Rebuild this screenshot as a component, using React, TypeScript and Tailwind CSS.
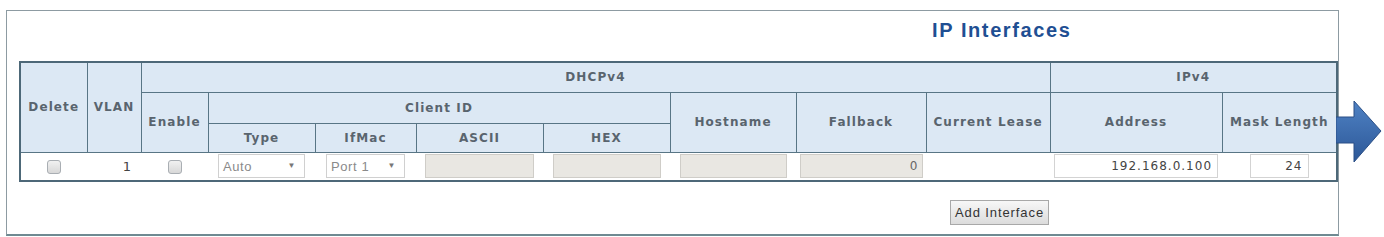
import React from 'react';

const headCell =
  'border border-[#587585] bg-[#dce8f4] text-center align-middle font-bold text-[12px] tracking-[1.1px] text-[#59646e] p-0';

const Checkbox = () => (
  <span className="inline-block w-[14px] h-[14px] rounded-[3px] border border-[#a9aeb3] bg-gradient-to-b from-[#f1f1f1] to-[#d8d8d8] align-middle" />
);

const FakeSelect: React.FC<{ value: string; width: string }> = ({ value, width }) => (
  <div
    className={`${width} h-[24px] mx-auto flex items-center justify-between border border-[#d0d0d0] bg-white pl-[4px] pr-[8px] text-[13px] tracking-[0.6px] text-[#8a8a8a]`}
    style={{ fontFamily: '"Liberation Sans", Arial, sans-serif' }}
  >
    <span>{value}</span>
    <span className="text-[8px] text-[#777]">▼</span>
  </div>
);

const DisabledInput: React.FC<{ width: string; value?: string }> = ({ width, value }) => (
  <div
    className={`${width} h-[24px] mx-auto flex items-center justify-end border border-[#cfcdc8] bg-[#e9e7e2] pr-[4px] text-[12px] text-[#666]`}
  >
    {value}
  </div>
);

const TextInput: React.FC<{ width: string; value: string }> = ({ width, value }) => (
  <div
    className={`${width} h-[24px] mx-auto flex items-center justify-end border border-[#d3d3d3] bg-white pr-[5px] text-[12px] tracking-[1px] text-[#444]`}
  >
    {value}
  </div>
);

export default function App() {
  return (
    <div className="relative w-[1384px] h-[237px] bg-white" style={{ fontFamily: '"DejaVu Sans", Verdana, sans-serif' }}>
      <div className="ml-[6px] pt-[10px]">
        <div className="w-[1333px] h-[226px] border border-[#8d9ba2] border-b-2 border-b-[#6f8a92] bg-white">
          {/* Title */}
          <div className="pl-[925px] pt-[8px] h-[50px]">
            <h2
              className="text-[20px] leading-[23px] font-bold tracking-[1.6px] text-[#1f4f93]"
              style={{ fontFamily: '"Liberation Sans", Arial, sans-serif' }}
            >
              IP Interfaces
            </h2>
          </div>

          {/* Table */}
          <table className="ml-[12px] w-[1317px] table-fixed border-collapse border-2 border-[#4d6878]">
            <colgroup>
              <col className="w-[67px]" />
              <col className="w-[54px]" />
              <col className="w-[67px]" />
              <col className="w-[107px]" />
              <col className="w-[101px]" />
              <col className="w-[127px]" />
              <col className="w-[127px]" />
              <col className="w-[126px]" />
              <col className="w-[130px]" />
              <col className="w-[124px]" />
              <col className="w-[172px]" />
              <col className="w-[115px]" />
            </colgroup>
            <thead>
              <tr className="h-[30px]">
                <th rowSpan={3} className={headCell}>Delete</th>
                <th rowSpan={3} className={headCell}>VLAN</th>
                <th colSpan={8} className={`${headCell} font-normal`}>
                  <span className="font-bold">DHCPv4</span>
                </th>
                <th colSpan={2} className={headCell}>IPv4</th>
              </tr>
              <tr className="h-[31px]">
                <th rowSpan={2} className={headCell}>Enable</th>
                <th colSpan={4} className={headCell}>Client ID</th>
                <th rowSpan={2} className={headCell}>Hostname</th>
                <th rowSpan={2} className={headCell}>Fallback</th>
                <th rowSpan={2} className={headCell}>Current Lease</th>
                <th rowSpan={2} className={headCell}>Address</th>
                <th rowSpan={2} className={headCell}>Mask Length</th>
              </tr>
              <tr className="h-[29px]">
                <th className={headCell}>Type</th>
                <th className={headCell}>IfMac</th>
                <th className={headCell}>ASCII</th>
                <th className={headCell}>HEX</th>
              </tr>
            </thead>
            <tbody>
              <tr className="h-[29px] bg-white">
                <td className="text-center p-0"><Checkbox /></td>
                <td className="text-right pr-[10px] p-0 text-[13px] text-[#444]">1</td>
                <td className="text-center p-0"><Checkbox /></td>
                <td className="p-0"><FakeSelect value="Auto" width="w-[87px]" /></td>
                <td className="p-0"><FakeSelect value="Port 1" width="w-[79px]" /></td>
                <td className="p-0"><DisabledInput width="w-[109px]" /></td>
                <td className="p-0"><DisabledInput width="w-[108px]" /></td>
                <td className="p-0"><DisabledInput width="w-[107px]" /></td>
                <td className="p-0"><DisabledInput width="w-[123px]" value="0" /></td>
                <td className="p-0" />
                <td className="p-0"><TextInput width="w-[164px]" value="192.168.0.100" /></td>
                <td className="p-0"><TextInput width="w-[59px]" value="24" /></td>
              </tr>
            </tbody>
          </table>

          {/* Footer button */}
          <div className="pl-[943px] pt-[18px]">
            <button
              className="w-[99px] h-[25px] border border-[#a8a8a8] bg-gradient-to-b from-[#f7f7f7] to-[#dcdcdc] text-[13px] tracking-[0.9px] text-[#333]"
              style={{ fontFamily: '"Liberation Sans", Arial, sans-serif' }}
            >
              Add Interface
            </button>
          </div>
        </div>
      </div>

      {/* Pointer arrow */}
      <svg className="absolute left-[1336px] top-[100px]" width="48" height="64" viewBox="0 0 48 64">
        <defs>
          <linearGradient id="arrowFill" x1="0" y1="0" x2="0" y2="1">
            <stop offset="0" stopColor="#4f82c4" />
            <stop offset="1" stopColor="#2c5797" />
          </linearGradient>
        </defs>
        <path d="M0 17 H18 V1 L45 31 L18 62 V43 H0 Z" fill="url(#arrowFill)" stroke="#2a4f86" strokeWidth="1" />
      </svg>
    </div>
  );
}
